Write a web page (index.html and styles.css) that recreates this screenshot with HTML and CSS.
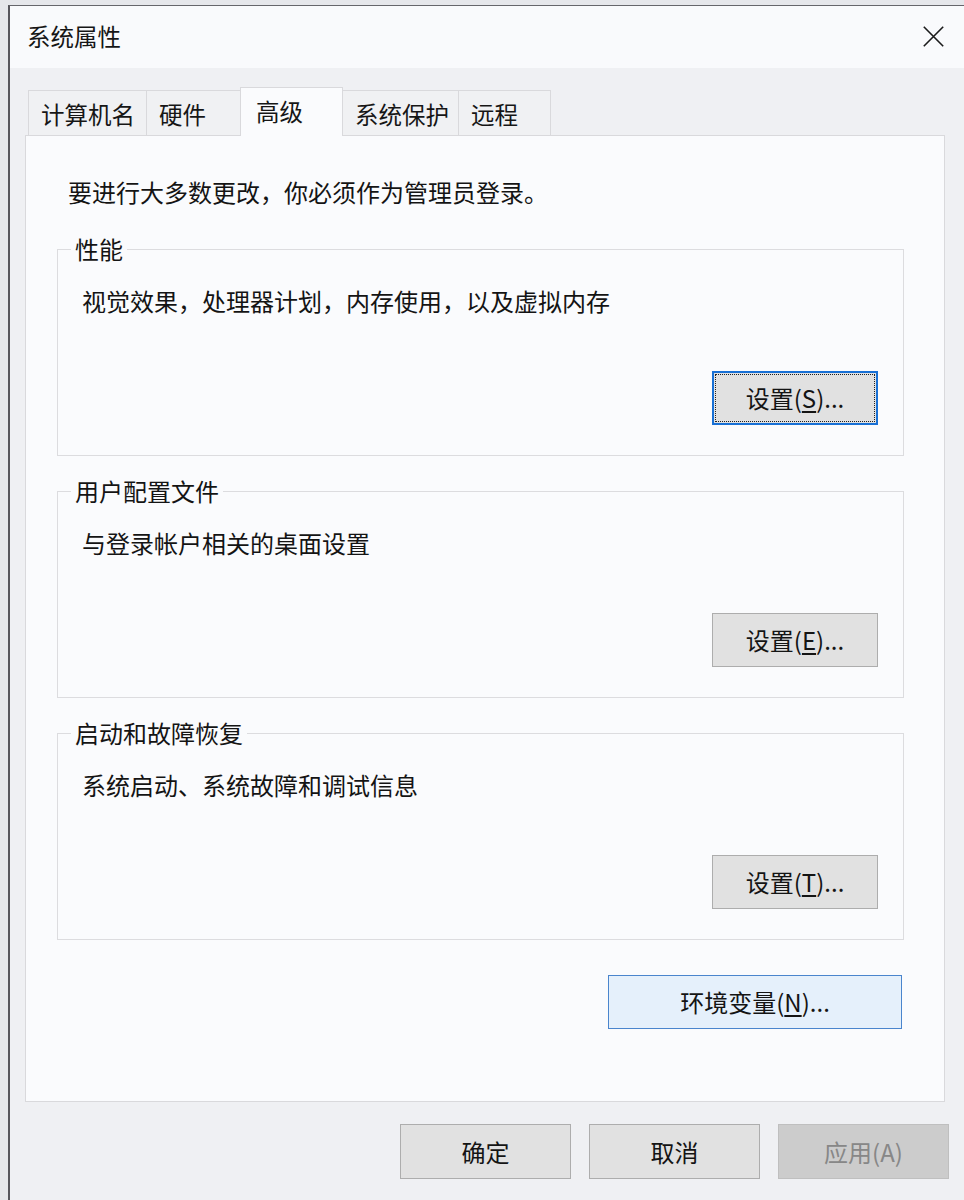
FILE: index.html
```html
<!DOCTYPE html>
<html lang="zh-CN">
<head>
<meta charset="utf-8">
<title>系统属性</title>
<link rel="stylesheet" href="styles.css">
</head>
<body>
<div class="screen">
  <div class="window">
    <header class="titlebar">
      <span class="title">系统属性</span>
      <span class="close" aria-label="关闭">
        <svg width="21" height="21" viewBox="0 0 21 21"><path d="M0.8 0.8 L20.2 20.2 M20.2 0.8 L0.8 20.2" stroke="#1b1b1b" stroke-width="1.6" fill="none"/></svg>
      </span>
    </header>
    <div class="client">
      <nav class="tabs">
        <div class="tab tab-name">计算机名</div>
        <div class="tab tab-hw">硬件</div>
        <div class="tab tab-adv active">高级</div>
        <div class="tab tab-prot">系统保护</div>
        <div class="tab tab-remote">远程</div>
      </nav>
      <section class="panel">
        <p class="intro">要进行大多数更改，你必须作为管理员登录。</p>
        <fieldset class="group">
          <legend>性能</legend>
          <p class="desc">视觉效果，处理器计划，内存使用，以及虚拟内存</p>
          <div class="actions"><button class="btn btn-set focused">设置(<u>S</u>)...</button></div>
        </fieldset>
        <fieldset class="group">
          <legend>用户配置文件</legend>
          <p class="desc">与登录帐户相关的桌面设置</p>
          <div class="actions"><button class="btn btn-set">设置(<u>E</u>)...</button></div>
        </fieldset>
        <fieldset class="group">
          <legend>启动和故障恢复</legend>
          <p class="desc">系统启动、系统故障和调试信息</p>
          <div class="actions"><button class="btn btn-set">设置(<u>T</u>)...</button></div>
        </fieldset>
        <div class="env-row"><button class="btn btn-env">环境变量(<u>N</u>)...</button></div>
      </section>
      <footer class="footer">
        <button class="btn btn-foot">确定</button>
        <button class="btn btn-foot">取消</button>
        <button class="btn btn-foot disabled">应用(A)</button>
      </footer>
    </div>
  </div>
</div>
</body>
</html>
```

FILE: styles.css
```css
html, body {
  margin: 0;
  padding: 0;
}

body {
  background: #e6e7eb;
  font-family: "Noto Sans CJK SC", "Noto Sans", "Liberation Sans", sans-serif;
  color: #141414;
}

.screen {
  width: 964px;
  height: 1200px;
  overflow: hidden;
  box-sizing: border-box;
  padding: 5px 0 0 8px;
}

.window {
  width: 960px;
  min-height: 1200px;
  border-left: 2px solid #57565c;
  border-top: 1px solid #66666b;
  background: #eff0f3;
}

.titlebar {
  height: 62px;
  background: #f9fafc;
  display: flex;
  align-items: center;
  justify-content: space-between;
  padding: 0 26px 0 17px;
}

.title {
  font-size: 23.5px;
  line-height: 1;
  color: #161616;
}

.close {
  display: flex;
  width: 21px;
  height: 21px;
  margin-top: -2px;
}

.client {
  padding: 19px 25px 0 15px;
}

/* Tabs */
.tabs {
  display: flex;
  align-items: flex-end;
  height: 48px;
  padding-left: 3px;
}

.tab {
  box-sizing: border-box;
  height: 45px;
  border: 1px solid #d9d9dc;
  border-bottom: none;
  background: #f0f1f3;
  font-size: 23.5px;
  line-height: 41px;
  padding: 3px 0 0 12px;
  white-space: nowrap;
  color: #161616;
}

.tab + .tab {
  margin-left: -1px;
}

.tab-name { width: 119px; }
.tab-hw { width: 95px; }
.tab-adv { width: 103px; }
.tab-prot { width: 117px; }
.tab-remote { width: 93px; }

.tab.active {
  position: relative;
  z-index: 1;
  height: 49px;
  margin-bottom: -1px;
  padding: 0 0 2px 15px;
  line-height: 46px;
  background: #fafbfd;
}

/* Panel */
.panel {
  border: 1px solid #d9d9dc;
  background: #fafbfd;
  padding: 40px 0 72px 0;
}

.intro {
  margin: 0 0 0 42px;
  font-size: 24px;
  line-height: 32px;
}

.group {
  margin: 26px 40px 0 31px;
  padding: 21px 0 30px 0;
  border: 1px solid #dcdcdf;
  min-inline-size: 0;
}

.group + .group {
  margin-top: 20px;
}

.group legend {
  margin-left: 13px;
  padding: 0 4px;
  font-size: 24px;
  line-height: 30px;
}

.desc {
  margin: 0 0 0 24px;
  font-size: 24px;
  line-height: 32px;
}

.actions {
  display: flex;
  justify-content: flex-end;
  margin-top: 54px;
  padding-right: 25px;
}

.env-row {
  display: flex;
  justify-content: flex-end;
  margin-top: 35px;
  padding-right: 42px;
}

/* Buttons */
.btn {
  box-sizing: border-box;
  height: 54px;
  border: 1px solid #adadad;
  background: #e1e1e1;
  font-family: inherit;
  font-size: 24px;
  line-height: 1;
  color: #141414;
  padding: 0;
  display: flex;
  align-items: center;
  justify-content: center;
}

.btn u {
  text-decoration-thickness: 1.5px;
  text-underline-offset: 3px;
}

.btn-set {
  width: 166px;
}

.btn-set.focused {
  border: 2px solid #1870d5;
  outline: 1.5px dotted #202020;
  outline-offset: -4px;
}

.btn-env {
  width: 294px;
  background: #e5f0fb;
  border: 1px solid #4a85cd;
}

.footer {
  display: flex;
  justify-content: flex-end;
  gap: 18px;
  margin: 22px -4px 0 0;
}

.btn-foot {
  width: 171px;
  height: 55px;
}

.btn-foot.disabled {
  background: #cccccc;
  border-color: #bfbfbf;
  color: #878787;
}
```
